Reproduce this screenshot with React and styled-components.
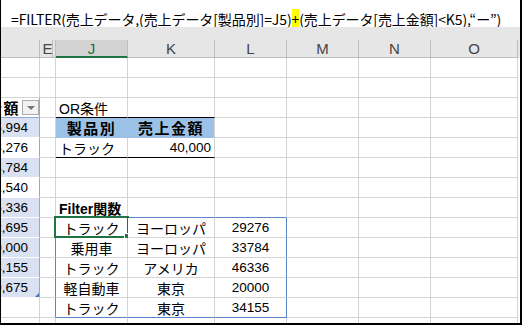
import React from 'react';
import styled, { createGlobalStyle } from 'styled-components';

const GlobalStyle = createGlobalStyle`
  html, body {
    margin: 0;
    padding: 0;
    background: #fff;
  }
  body {
    font-family: "Liberation Sans", "Noto Sans CJK JP", sans-serif;
  }
`;

/* column widths incl. right gridline: D (clipped), E, J, K, L, M, N, O */
const COLS = [39, 16, 72, 87, 72, 72, 72, 87];
const GRID = '#d4d4d4';
const SPILL = '#5a86c9';
const BAND = '#d9e1f2';
const TABLE_EDGE = '#8ea9db';
const HEAD_BLUE = '#9bc2e6';
const GREEN = '#217346';

const Window = styled.div`
  width: 519px;
  height: 323px;
  border-left: 1px solid #000;
  border-right: 2px solid #000;
  border-bottom: 2px solid #000;
  display: flex;
  flex-direction: column;
  overflow: hidden;
  background: #fff;
`;

const FormulaBar = styled.div`
  flex: none;
  height: 27px;
  box-sizing: border-box;
  padding: 12px 0 0 10px;
  font-family: "Noto Sans CJK JP", sans-serif;
  font-size: 14px;
  line-height: 14px;
  letter-spacing: -0.1px;
  color: #000;
  white-space: nowrap;
  background: #fff;
`;

const Highlight = styled.span`
  background: #ffff00;
`;

const Gap = styled.div`
  flex: none;
  height: 13px;
  background: #e6e6e6;
`;

const HeaderRow = styled.div`
  flex: none;
  display: grid;
  grid-template-columns: ${COLS.map((w) => `${w}px`).join(' ')} 1fr;
  height: 18px;
  background: #e6e6e6;
`;

const ColHead = styled.div`
  box-sizing: border-box;
  height: 18px;
  display: flex;
  align-items: center;
  justify-content: center;
  font-size: 15px;
  color: ${(p) => (p.$active ? GREEN : '#444')};
  background: ${(p) => (p.$active ? '#d2d2d2' : '#e6e6e6')};
  border-right: 1px solid #bdbdbd;
  border-bottom: ${(p) => (p.$active ? `2px solid ${GREEN}` : '1px solid #bdbdbd')};
  box-shadow: ${(p) => (p.$hidden ? 'inset -2px 0 0 #e6e6e6, inset -3px 0 0 #bdbdbd' : 'none')};
`;

const Sheet = styled.div`
  flex: none;
  display: grid;
  grid-template-columns: ${COLS.map((w) => `${w}px`).join(' ')};
  grid-auto-rows: 20px;
`;

const Cell = styled.div`
  position: relative;
  box-sizing: border-box;
  height: 20px;
  padding: 0 3px;
  display: flex;
  align-items: center;
  justify-content: ${(p) =>
    p.$align === 'center' ? 'center' : p.$align === 'right' ? 'flex-end' : 'flex-start'};
  border-right: 1px solid ${(p) => p.$right || GRID};
  border-bottom: 1px solid ${(p) => p.$bottom || GRID};
  background: ${(p) => p.$bg || '#fff'};
  font-size: 14px;
  font-weight: ${(p) => (p.$bold ? 700 : 400)};
  color: #000;
  white-space: nowrap;
`;

const TableCell = styled(Cell)`
  padding: 0 11px 0 0;
  justify-content: flex-end;
  overflow: hidden;
`;

const TableHeadCell = styled(Cell)`
  padding: 0;
  justify-content: flex-end;
  overflow: hidden;
`;

const Num = styled.span`
  font-family: "Liberation Sans", sans-serif;
  font-size: 13.5px;
`;

const HeadLabel = styled.span`
  font-size: 15px;
  font-weight: 700;
  letter-spacing: 1.5px;
`;

const FilterButton = styled.span`
  flex: none;
  box-sizing: border-box;
  width: 17px;
  height: 15px;
  margin-left: 2px;
  border: 1px solid #ababab;
  background: #f2f2f2;
  display: flex;
  align-items: center;
  justify-content: center;
  &::after {
    content: '';
    border-left: 4px solid transparent;
    border-right: 4px solid transparent;
    border-top: 4px solid #777;
  }
`;

const ResizeHandle = styled.span`
  position: absolute;
  right: 0;
  bottom: 0;
  width: 0;
  height: 0;
  border-left: 4px solid transparent;
  border-bottom: 4px solid #4472c4;
`;

const Selection = styled.span`
  position: absolute;
  top: -2px;
  left: -2px;
  right: -2px;
  bottom: -1px;
  border: 2px solid ${GREEN};
  pointer-events: none;
  &::after {
    content: '';
    position: absolute;
    right: -4px;
    bottom: -4px;
    width: 5px;
    height: 5px;
    background: ${GREEN};
    border: 1px solid #fff;
  }
`;

const tableValues = [
  ['25,994', true],
  ['18,276', false],
  ['33,784', true],
  ['21,540', false],
  ['46,336', true],
  ['12,695', true],
  ['20,000', true],
  ['34,155', true],
  ['29,675', true],
];

const filterRows = [
  ['トラック', 'ヨーロッパ', '29276'],
  ['乗用車', 'ヨーロッパ', '33784'],
  ['トラック', 'アメリカ', '46336'],
  ['軽自動車', '東京', '20000'],
  ['トラック', '東京', '34155'],
];

function Blank({ n, ...rest }) {
  return Array.from({ length: n }, (_, i) => <Cell key={i} {...rest} />);
}

function TableColumn({ row }) {
  // the left Excel table, clipped by the window edge
  if (row === 0) {
    return (
      <TableHeadCell $right={TABLE_EDGE} $bottom={TABLE_EDGE}>
        <HeadLabel>売上金額</HeadLabel>
        <FilterButton />
      </TableHeadCell>
    );
  }
  const v = tableValues[row - 1];
  if (!v) return <Cell />;
  return (
    <TableCell $bg={v[1] ? BAND : '#fff'} $right={TABLE_EDGE} $bottom="#fff">
      <Num>{v[0]}</Num>
      {row === tableValues.length && <ResizeHandle />}
    </TableCell>
  );
}

export default function App() {
  return (
    <>
      <GlobalStyle />
      <Window>
        <FormulaBar>
          =FILTER(売上データ,(売上データ[製品別]=J5)<Highlight>+</Highlight>(売上データ[売上金額]&lt;K5),“ー”)
        </FormulaBar>
        <Gap />
        <HeaderRow>
          <ColHead />
          <ColHead $hidden>E</ColHead>
          <ColHead $active>J</ColHead>
          <ColHead>K</ColHead>
          <ColHead>L</ColHead>
          <ColHead>M</ColHead>
          <ColHead>N</ColHead>
          <ColHead>O</ColHead>
          <div />
        </HeaderRow>
        <Sheet>
          {/* rows 1-2 */}
          <Blank n={16} />

          {/* row 3: OR条件 */}
          <TableColumn row={0} />
          <Cell />
          <Cell $bottom="#000">OR条件</Cell>
          <Cell $bottom="#000" />
          <Blank n={4} />

          {/* row 4: criteria header */}
          <TableColumn row={1} />
          <Cell />
          <Cell $align="center" $bg={HEAD_BLUE} $right={HEAD_BLUE} $bottom={HEAD_BLUE}>
            <HeadLabel>製品別</HeadLabel>
          </Cell>
          <Cell $align="center" $bg={HEAD_BLUE} $bottom={HEAD_BLUE}>
            <HeadLabel>売上金額</HeadLabel>
          </Cell>
          <Blank n={4} />

          {/* row 5: criteria values */}
          <TableColumn row={2} />
          <Cell />
          <Cell $bottom="#000">トラック</Cell>
          <Cell $bottom="#000" $align="right">
            <Num>40,000</Num>
          </Cell>
          <Blank n={4} />

          {/* rows 6-7 */}
          <TableColumn row={3} />
          <Blank n={7} />
          <TableColumn row={4} />
          <Blank n={7} />

          {/* row 8: Filter関数 */}
          <TableColumn row={5} />
          <Cell />
          <Cell $bold $bottom={SPILL}>Filter関数</Cell>
          <Cell $bottom={SPILL} />
          <Cell $bottom={SPILL} />
          <Blank n={3} />

          {/* rows 9-13: spilled result */}
          {filterRows.map((r, i) => {
            const edge = i === filterRows.length - 1 ? SPILL : undefined;
            return (
              <React.Fragment key={i}>
                <TableColumn row={6 + i} />
                <Cell $right={SPILL} />
                <Cell $align="center" $bottom={edge}>
                  {r[0]}
                  {i === 0 && <Selection />}
                </Cell>
                <Cell $align="center" $bottom={edge}>
                  {r[1]}
                </Cell>
                <Cell $align="center" $bottom={edge} $right={SPILL}>
                  <Num>{r[2]}</Num>
                </Cell>
                <Blank n={3} />
              </React.Fragment>
            );
          })}

          {/* row 14 (cut off) */}
          <Blank n={8} />
        </Sheet>
      </Window>
    </>
  );
}
